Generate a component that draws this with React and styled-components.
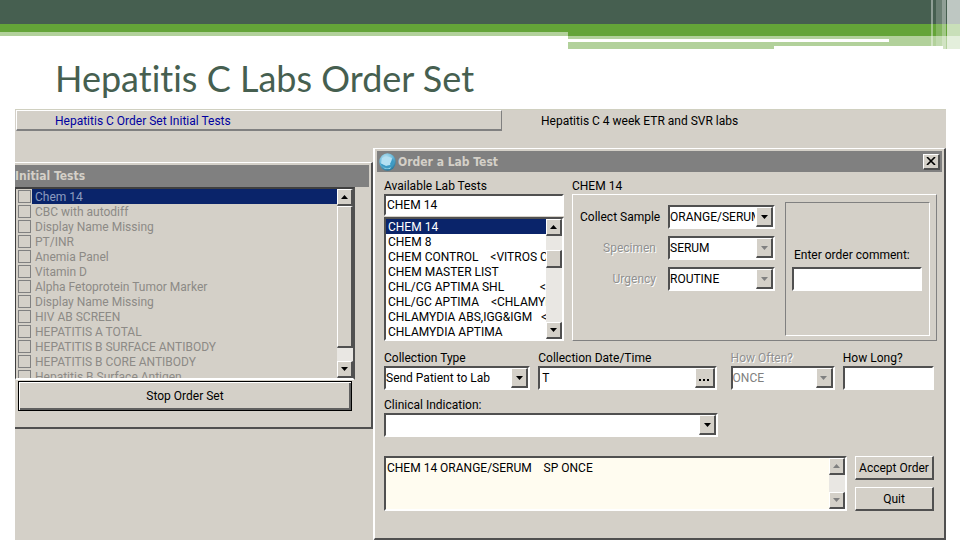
import React, {useState} from 'react'
import styled, {createGlobalStyle, css} from 'styled-components'

const initialTests = [
    'Chem 14',
    'CBC with autodiff',
    'Display Name Missing',
    'PT/INR',
    'Anemia Panel',
    'Vitamin D',
    'Alpha Fetoprotein Tumor Marker',
    'Display Name Missing',
    'HIV AB SCREEN',
    'HEPATITIS A TOTAL',
    'HEPATITIS B SURFACE ANTIBODY',
    'HEPATITIS B CORE ANTIBODY',
    'Hepatitis B Surface Antigen',
]

const labTests = [
    'CHEM 14',
    'CHEM 8',
    'CHEM CONTROL    <VITROS C',
    'CHEM MASTER LIST',
    'CHL/CG APTIMA SHL            <',
    'CHL/GC APTIMA    <CHLAMYDIA',
    'CHLAMYDIA ABS,IGG&IGM   <',
    'CHLAMYDIA APTIMA',
]

const App = () => {
    const [selected, setSelected] = useState(0)
    return (
        <>
            <GlobalStyle/>
            <Banner/>
            <Title>Hepatitis C Labs Order Set</Title>
            <Workspace>
                <Tabs>
                    <Tab $active>Hepatitis C Order Set Initial Tests</Tab>
                    <Tab>Hepatitis C 4 week ETR and SVR labs</Tab>
                </Tabs>
                <Windows>
                    <InitialTests/>
                    <Dialog>
                        <DialogBar>
                            <GlobeIcon/>
                            <h2>Order a Lab Test</h2>
                            <CloseButton aria-label="Close">
                                <svg width="10" height="8" viewBox="0 0 10 8">
                                    <path d="M1 0l8 8M9 0L1 8" stroke="#000" strokeWidth="1.6"/>
                                </svg>
                            </CloseButton>
                        </DialogBar>
                        <DialogBody>
                            <TopArea>
                                <TestPicker>
                                    <Label htmlFor="search">Available Lab Tests</Label>
                                    <SearchBox id="search" defaultValue="CHEM 14"/>
                                    <ListBox>
                                        <Options role="listbox" aria-label="Lab tests">
                                            {labTests.map((test, i) => (
                                                <Option
                                                    key={test}
                                                    role="option"
                                                    aria-selected={i === selected}
                                                    $selected={i === selected}
                                                    onClick={() => setSelected(i)}
                                                >
                                                    {test}
                                                </Option>
                                            ))}
                                        </Options>
                                        <ScrollBar before={14} thumb={18}/>
                                    </ListBox>
                                </TestPicker>
                                <Details>
                                    <Label as="h3">CHEM 14</Label>
                                    <Group>
                                        <SampleForm>
                                            <Label htmlFor="sample">Collect Sample</Label>
                                            <Combo id="sample" value="ORANGE/SERUM"/>
                                            <Label htmlFor="specimen" $disabled>Specimen</Label>
                                            <Combo id="specimen" value="SERUM" disabled/>
                                            <Label htmlFor="urgency" $disabled>Urgency</Label>
                                            <Combo id="urgency" value="ROUTINE" disabled/>
                                        </SampleForm>
                                        <CommentBox>
                                            <Label htmlFor="comment">Enter order comment:</Label>
                                            <TextBox id="comment"/>
                                        </CommentBox>
                                    </Group>
                                </Details>
                            </TopArea>
                            <Schedule>
                                <Field>
                                    <Label htmlFor="type">Collection Type</Label>
                                    <Combo id="type" value="Send Patient to Lab"/>
                                </Field>
                                <Field>
                                    <Label htmlFor="date">Collection Date/Time</Label>
                                    <DateBox>
                                        <input id="date" defaultValue="T"/>
                                        <DotsButton aria-label="Pick date">
                                            <i/><i/><i/>
                                        </DotsButton>
                                    </DateBox>
                                </Field>
                                <Field $inset>
                                    <Label htmlFor="often" $disabled>How Often?</Label>
                                    <Combo id="often" value="ONCE" disabled faded/>
                                </Field>
                                <Field>
                                    <Label htmlFor="long">How Long?</Label>
                                    <TextBox id="long"/>
                                </Field>
                            </Schedule>
                            <Indication>
                                <Label htmlFor="indication">Clinical Indication:</Label>
                                <Combo id="indication" value=""/>
                            </Indication>
                            <Footer>
                                <Summary>
                                    <textarea
                                        aria-label="Order summary"
                                        readOnly
                                        value="CHEM 14 ORANGE/SERUM    SP ONCE"
                                    />
                                    <ScrollBar disabled/>
                                </Summary>
                                <Actions>
                                    <PushButton>Accept Order</PushButton>
                                    <PushButton>Quit</PushButton>
                                </Actions>
                            </Footer>
                        </DialogBody>
                    </Dialog>
                </Windows>
            </Workspace>
        </>
    )
}

//Coloured stripes over the slide
const Banner = () => (
    <BannerStyle>
        <DarkStripe/>
        <Stripes>
            <LeftStripes/>
            <RightStripes>
                <GreenStripe/>
                <LightStripe/>
                <Tail/>
            </RightStripes>
        </Stripes>
        <Glass>
            <Pane $w={2} $o={0.4}/>
            <Pane $w={3} $o={0}/>
            <Pane $w={6} $o={0.2}/>
            <Pane $w={4} $o={0.4}/>
            <Pane $w={1} $o={0}/>
            <Pane $w={13} $o={0.65}/>
        </Glass>
    </BannerStyle>
)

//Order set window with the list of checkable tests
const InitialTests = () => (
    <Panel>
        <PanelBar>Initial Tests</PanelBar>
        <CheckList>
            <Checks>
                {initialTests.map((test, i) => (
                    <Check key={i} $selected={i === 0}>
                        <input type="checkbox" disabled/>
                        <span>{test}</span>
                    </Check>
                ))}
            </Checks>
            <ScrollBar thumb={142}/>
        </CheckList>
        <StopButton>Stop Order Set</StopButton>
    </Panel>
)

const Arrow = ({up, disabled}) => (
    <svg width="7" height="4" viewBox="0 0 7 4">
        <path d={up ? 'M0 4h7L3.5 0z' : 'M0 0h7L3.5 4z'} fill={disabled ? '#808080' : '#000'}/>
    </svg>
)

const ScrollBar = ({before = 0, thumb, disabled}) => (
    <ScrollTrack>
        <ScrollButton aria-label="Scroll up" disabled={disabled}><Arrow up disabled={disabled}/></ScrollButton>
        {thumb && <Thumb $before={before} $size={thumb}/>}
        <Spacer/>
        <ScrollButton aria-label="Scroll down" disabled={disabled}><Arrow disabled={disabled}/></ScrollButton>
    </ScrollTrack>
)

const Combo = ({id, value, disabled, faded}) => (
    <ComboStyle $faded={faded}>
        <select id={id} defaultValue={value} disabled={disabled}>
            <option value={value}>{value}</option>
        </select>
        <ComboArrow><Arrow disabled={disabled}/></ComboArrow>
    </ComboStyle>
)

const GlobeIcon = () => (
    <svg width="17" height="18" viewBox="0 0 17 18">
        <defs>
            <radialGradient id="globe" cx="0.4" cy="0.3" r="0.7">
                <stop offset="0" stopColor="#c4e6f2"/>
                <stop offset="0.6" stopColor="#6cbbdc"/>
                <stop offset="1" stopColor="#2a7a9e"/>
            </radialGradient>
        </defs>
        <ellipse cx="8.5" cy="9" rx="8.2" ry="8.7" fill="url(#globe)"/>
        <path d="M3 5q4-3 10 0l-2 7-4 1-5-2z" fill="#b4e0f2"/>
        <path d="M1 10l6 3 5-1-1-1 3-6 1 4-2 5-5 1-5-2z" fill="#3d9ac4"/>
        <path d="M4 14q4 3 8 0l-1 2H6z" fill="#9adcf0"/>
    </svg>
)

//Styles
const GlobalStyle = createGlobalStyle`
  * {
    box-sizing: border-box;
  }
  body {
    margin: 0;
    background: #fff;
    color: #000;
  }
  body, button, input, select, textarea {
    font-family: Roboto, "Liberation Sans", sans-serif;
    font-size: 12px;
  }
  #root {
    display: flex;
    flex-direction: column;
    min-height: 100vh;
  }
  h1, h2, h3, ul {
    margin: 0;
    padding: 0;
  }
  button {
    padding: 0;
    color: #000;
  }
  svg {
    display: block;
    flex: none;
  }
`;
const raised = css`
  background: #d4d0c8;
  border: solid;
  border-width: 1px 2px 2px 1px;
  border-color: #fff #505050 #505050 #fff;
`;
const sunken = css`
  background: #fff;
  border: solid;
  border-width: 2px;
  border-color: #505050 #fff #fff #505050;
`;
const BannerStyle = styled.div`
  position: relative;
  height: 49px;
`;
const DarkStripe = styled.div`
  height: 24px;
  background: #465f50;
`;
const Stripes = styled.div`
  display: grid;
  grid-template-columns: 568fr 392fr;
`;
const LeftStripes = styled.div`
  height: 12px;
  background: #64a438;
  border-bottom: 4px solid #b2d19b;
`;
const RightStripes = styled.div`
  height: 25px;
  background: #b2d19b;
`;
const GreenStripe = styled.div`
  height: 12px;
  background: #64a438;
`;
const LightStripe = styled.div`
  height: 3px;
  width: 82%;
  margin-top: 3px;
  background: #fff;
`;
const Tail = styled.div`
  height: 3px;
  margin: 4px 17px 0 206px;
  background: #fff;
`;
const Glass = styled.div`
  position: absolute;
  top: 0;
  right: 0;
  bottom: 0;
  display: flex;
`;
const Pane = styled.div`
  width: ${p => p.$w}px;
  background: rgba(255, 255, 255, ${p => p.$o});
`;
const Title = styled.h1`
  padding: 8px 55px 0;
  height: 60px;
  font: 400 36px/42px Lato, sans-serif;
  font-variant-ligatures: none;
  color: #465f50;
`;
const Workspace = styled.main`
  flex: 1;
  display: flex;
  flex-direction: column;
  margin: 0 14px 0 15px;
  background: #d4d0c8;
  border-top: 1px solid #d0d0c0;
`;
const Tabs = styled.div`
  display: grid;
  grid-template-columns: 486fr 444fr;
  padding-left: 1px;
`;
const Tab = styled.button`
  height: 21px;
  padding: 2px 0 0 38px;
  text-align: left;
  background: #d4d0c8;
  border: solid transparent;
  border-width: 1px 1px 2px;
  ${p => p.$active && css`
    color: #0000a0;
    border-color: #fff #808080 #808080 #fff;
  `}
`;
const Windows = styled.div`
  flex: 1;
  display: grid;
  grid-template-columns: 358fr 573fr;
  align-items: start;
`;
const Panel = styled.section`
  margin-top: 31px;
  padding: 2px 2px 16px 0;
  border: solid;
  border-width: 1px 2px 2px 0;
  border-color: #fff #505050 #505050;
`;
const barText = css`
  font: 700 12px/16px "DejaVu Sans Condensed", "DejaVu Sans", sans-serif;
  color: #d4d0c8;
`;
const PanelBar = styled.h2`
  ${barText}
  height: 22px;
  padding: 3px 0;
  background: #808080;
`;
const CheckList = styled.div`
  display: flex;
  height: 193px;
  margin-right: 14px;
  border: solid;
  border-width: 2px 2px 2px 1px;
  border-color: #404040 #505050 #fff #404040;
`;
const Checks = styled.div`
  flex: 1;
  overflow: hidden;
`;
const Check = styled.label`
  display: flex;
  height: 15px;
  line-height: 17px;
  white-space: nowrap;
  color: #8c8a86;
  input {
    appearance: none;
    flex: none;
    width: 13px;
    height: 13px;
    margin: 1px 1px 1px 2px;
    border: 1px solid #808080;
  }
  span {
    flex: 1;
    padding-left: 3px;
    ${p => p.$selected && css`
      background: #0a246a;
      color: #8c9cc0;
    `}
  }
`;
const ScrollTrack = styled.div`
  flex: none;
  display: flex;
  flex-direction: column;
  width: 16px;
  background: #e9e7e3;
`;
const ScrollButton = styled.button`
  ${raised}
  flex: none;
  display: grid;
  place-items: center;
  height: 17px;
`;
const Thumb = styled.div`
  ${raised}
  height: ${p => p.$size}px;
  margin-top: ${p => p.$before}px;
`;
const Spacer = styled.div`
  flex: 1;
`;
const StopButton = styled.button`
  display: block;
  width: calc(100% - 20px);
  height: 30px;
  margin: 1px 0 0 3px;
  background: #d4d0c8;
  border: 1px solid #000;
  box-shadow: inset 1px 1px #fff, inset -2px -2px #606060;
`;
const Dialog = styled.section`
  margin-top: 17px;
  padding: 2px;
  background: #d4d0c8;
  border: solid;
  border-width: 1px 2px 3px;
  border-color: #fff #505050 #505050 #fff;
`;
const DialogBar = styled.header`
  display: flex;
  align-items: center;
  height: 21px;
  padding: 0 2px;
  background: #808080;
  h2 {
    ${barText}
    flex: 1;
    padding-left: 2px;
  }
`;
const CloseButton = styled.button`
  ${raised}
  display: grid;
  place-items: center;
  width: 17px;
  height: 16px;
`;
const DialogBody = styled.div`
  padding: 6px 4px 25px 7px;
`;
const TopArea = styled.div`
  display: grid;
  grid-template-columns: 180fr 365fr;
  gap: 8px;
  padding-right: 1px;
`;
const Label = styled.label`
  display: block;
  font-size: 12px;
  font-weight: 400;
  line-height: 16px;
  white-space: nowrap;
  ${p => p.$disabled && css`
    color: #909090;
    text-shadow: 1px 1px #fff;
  `}
`;
const TestPicker = styled.div`
  min-width: 0;
`;
const TextBox = styled.input`
  ${sunken}
  display: block;
  width: 100%;
  height: 24px;
  padding: 0 1px;
`;
const SearchBox = styled(TextBox)`
  height: 22px;
  margin-bottom: 1px;
`;
const ListBox = styled.div`
  ${sunken}
  display: flex;
  height: 124px;
`;
const Options = styled.ul`
  flex: 1;
  overflow: hidden;
  list-style: none;
`;
const Option = styled.li`
  height: 15px;
  padding-left: 2px;
  line-height: 17px;
  white-space: pre;
  ${p => p.$selected && css`
    background: #0a246a;
    color: #fff;
  `}
`;
const Details = styled.div`
  min-width: 0;
`;
const Group = styled.div`
  display: flex;
  justify-content: space-between;
  height: 147px;
  padding: 7px 6px 4px 7px;
  border: 1px solid;
  border-color: #fff #808080 #808080 #fff;
`;
const SampleForm = styled.div`
  display: grid;
  grid-template-columns: 76px 107px;
  gap: 7px 12px;
  align-content: start;
  align-items: center;
  padding-top: 3px;
  text-align: right;
`;
const CommentBox = styled.div`
  width: 145px;
  padding: 44px 7px 0 6px;
  border: 1px solid;
  border-color: #808080 #fff #fff #808080;
  label {
    padding: 0 0 4px 2px;
  }
`;
const ComboStyle = styled.div`
  ${sunken}
  position: relative;
  height: 24px;
  select {
    appearance: none;
    display: block;
    width: 100%;
    height: 100%;
    padding: 0 18px 0 0;
    border: 0;
    background: none;
    color: ${p => p.$faded ? '#808080' : '#000'};
    opacity: 1;
  }
`;
const ComboArrow = styled.span`
  ${raised}
  position: absolute;
  top: 0;
  right: 0;
  bottom: 0;
  display: grid;
  place-items: center;
  width: 17px;
  pointer-events: none;
`;
const Schedule = styled.div`
  display: grid;
  grid-template-columns: 146fr 178fr 110fr 91fr;
  column-gap: 8px;
  padding: 9px 4px 0 0;
`;
const Field = styled.div`
  min-width: 0;
  padding-left: ${p => p.$inset ? 6 : 0}px;
`;
const DateBox = styled.div`
  ${sunken}
  display: flex;
  height: 24px;
  input {
    flex: 1;
    min-width: 0;
    padding: 0 2px;
    border: 0;
    background: none;
  }
`;
const DotsButton = styled.button`
  ${raised}
  display: flex;
  align-items: center;
  justify-content: center;
  gap: 2px;
  width: 20px;
  padding-top: 4px;
  i {
    width: 2px;
    height: 2px;
    background: #000;
  }
`;
const Indication = styled.div`
  max-width: 334px;
  padding-top: 7px;
`;
const Footer = styled.div`
  display: flex;
  gap: 8px;
  padding: 19px 4px 0 0;
`;
const Summary = styled.div`
  ${sunken}
  flex: 1;
  display: flex;
  height: 55px;
  background: #fffcf0;
  textarea {
    flex: 1;
    padding: 2px 1px;
    border: 0;
    background: none;
    line-height: 16px;
    resize: none;
  }
`;
const Actions = styled.div`
  display: flex;
  flex-direction: column;
  justify-content: space-between;
  width: 79px;
`;
const PushButton = styled.button`
  ${raised}
  height: 24px;
`;
export default App
